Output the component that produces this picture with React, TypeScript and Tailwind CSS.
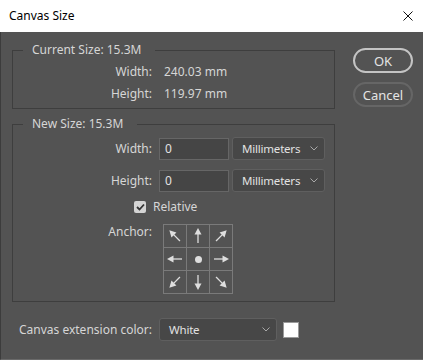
import React from 'react';

const font = { fontFamily: '"Noto Sans", "Liberation Sans", sans-serif' };

function Chevron() {
  return (
    <svg width="8" height="5" viewBox="0 0 8 5" className="shrink-0">
      <path d="M0.5 0.5 L4 4 L7.5 0.5" fill="none" stroke="#a8a8a8" strokeWidth="1" />
    </svg>
  );
}

function Select({ value, className }: { value: string; className: string }) {
  return (
    <div
      className={`flex items-center justify-between h-[23px] pl-[9px] pr-[6px] rounded-[3px] border border-[#5f5f5f] bg-[#474747] text-[#e2e2e2] text-[11.5px] tracking-[-0.2px] ${className}`}
    >
      <span>{value}</span>
      <Chevron />
    </div>
  );
}

// arrow pointing up, rotated for each direction
function Arrow({ deg }: { deg: number }) {
  return (
    <svg width="22" height="22" viewBox="0 0 22 22">
      <g transform={`rotate(${deg} 11 11)`}>
        <line x1="11" y1="18" x2="11" y2="8" stroke="#dedede" strokeWidth="1.3" />
        <polygon points="11,3 7.5,9.5 14.5,9.5" fill="#dedede" />
      </g>
    </svg>
  );
}

const anchorCells = [-45, 0, 45, -90, null, 90, -135, 180, 135];

export default function App() {
  return (
    <div className="w-[423px] h-[360px] text-[12px] leading-4" style={font}>
      <div className="h-8 bg-white flex items-center justify-between pl-[9px] pr-[10px] text-black">
        <span>Canvas Size</span>
        <svg width="10" height="10" viewBox="0 0 10 10">
          <path d="M0.5 0.5 L9.5 9.5 M9.5 0.5 L0.5 9.5" stroke="#111" strokeWidth="1" />
        </svg>
      </div>

      <div className="h-[328px] bg-[#535353] border-l border-[#3c3c3c] border-b border-b-[#6a6a6a] flex text-[#d6d6d6]">
        <div className="pl-[11px] w-[334px]">
          <fieldset className="mt-[10px] border border-[#3e3e3e] pt-[3px] pb-[3px]">
            <legend className="ml-[10px] px-[9px] pr-[14px] leading-4">Current Size: 15.3M</legend>
            <div className="flex items-center h-[22px]">
              <span className="w-[139px] text-right">Width:</span>
              <span className="ml-[12px]">240.03 mm</span>
            </div>
            <div className="flex items-center h-[22px]">
              <span className="w-[139px] text-right">Height:</span>
              <span className="ml-[12px]">119.97 mm</span>
            </div>
          </fieldset>

          <fieldset className="mt-[7px] border border-[#3e3e3e] pt-[5px] pb-[7px]">
            <legend className="ml-[10px] px-[9px] pr-[14px] leading-4">New Size: 15.3M</legend>
            <div className="flex items-center">
              <span className="w-[139px] text-right">Width:</span>
              <div className="ml-[7px] w-[70px] h-[22px] bg-[#454545] border border-[#666666] pl-[5px] flex items-center text-[#e2e2e2]">0</div>
              <Select value="Millimeters" className="ml-[3px] w-[93px]" />
            </div>
            <div className="flex items-center mt-[9px]">
              <span className="w-[139px] text-right">Height:</span>
              <div className="ml-[7px] w-[70px] h-[22px] bg-[#454545] border border-[#666666] pl-[5px] flex items-center text-[#e2e2e2]">0</div>
              <Select value="Millimeters" className="ml-[3px] w-[93px]" />
            </div>
            <div className="flex items-center h-[20px] mt-[5px]">
              <div className="ml-[121px] w-[12px] h-[12px] rounded-[2px] bg-[#d4d4d4] flex items-center justify-center">
                <svg width="9" height="8" viewBox="0 0 9 8">
                  <path d="M1 4 L3.5 6.5 L8 1.5" fill="none" stroke="#333" strokeWidth="1.8" />
                </svg>
              </div>
              <span className="ml-[7px]">Relative</span>
            </div>
            <div className="flex items-start mt-[7px]">
              <span className="w-[139px] text-right">Anchor:</span>
              <div className="ml-[11px] grid grid-cols-3 border-l border-t border-[#7a7a7a]">
                {anchorCells.map((deg, i) => (
                  <div key={i} className="w-[23px] h-[23px] border-r border-b border-[#7a7a7a] flex items-center justify-center">
                    {deg === null ? (
                      <div className="w-[7px] h-[7px] rounded-full bg-[#dedede]" />
                    ) : (
                      <Arrow deg={deg} />
                    )}
                  </div>
                ))}
              </div>
            </div>
          </fieldset>

          <div className="flex items-center mt-[16px]">
            <span className="w-[140px] text-right">Canvas extension color:</span>
            <Select value="White" className="ml-[7px] w-[118px]" />
            <div className="ml-[6px] w-[16px] h-[16px] bg-white border border-[#9a9a9a]" />
          </div>
        </div>

        <div className="ml-[18px] pt-[16px] flex flex-col">
          <button className="w-[60px] h-[25px] rounded-full border-2 border-[#c4c4c4] text-[#e4e4e4] text-[13px]">OK</button>
          <button className="mt-[9px] w-[60px] h-[25px] rounded-full border-2 border-[#666666] text-[#e4e4e4] text-[13px]">Cancel</button>
        </div>
      </div>
    </div>
  );
}
